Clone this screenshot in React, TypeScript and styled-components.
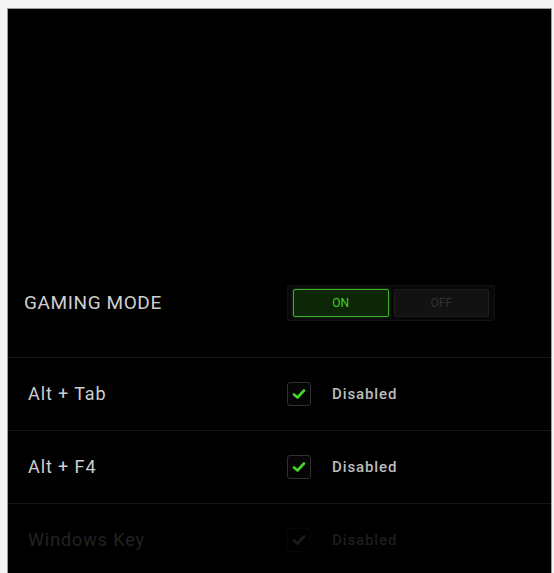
import React from 'react';
import styled, { createGlobalStyle } from 'styled-components';

const GlobalStyle = createGlobalStyle`
  html, body {
    margin: 0;
    padding: 0;
    background: #f4f4f4;
  }
  body {
    padding: 8px 2px 0 7px;
    font-family: Roboto, "Liberation Sans", sans-serif;
  }
`;

const Panel = styled.div`
  height: 565px;
  background: #000;
  border: 1px solid #9c9c9c;
  border-bottom: none;
  display: flex;
  flex-direction: column;
  overflow: hidden;
`;

const TopArea = styled.div`
  height: 239px;
  flex-shrink: 0;
`;

const Row = styled.div<{ $tall?: boolean }>`
  flex-shrink: 0;
  display: grid;
  grid-template-columns: ${p => (p.$tall ? '263px' : '259px')} 1fr;
  align-items: center;
  height: ${p => (p.$tall ? '109px' : '72px')};
  padding-left: ${p => (p.$tall ? '16px' : '20px')};
  border-bottom: 1px solid #181818;
`;

const Label = styled.div<{ $caps?: boolean; $dim?: boolean }>`
  font-size: ${p => (p.$caps ? '19px' : '18px')};
  color: ${p => (p.$dim ? '#222' : '#cfcfcf')};
  letter-spacing: ${p => (p.$caps ? '0.6px' : '0.9px')};
  margin-top: ${p => (p.$caps ? '0' : '-2px')};
`;

const Toggle = styled.div`
  display: flex;
  gap: 5px;
  width: 196px;
  padding: 3px 5px;
  background: #080808;
  border: 1px solid #111;
  border-radius: 2px;
`;

const ToggleButton = styled.div<{ $active?: boolean }>`
  flex: 1;
  height: 26px;
  display: flex;
  align-items: center;
  justify-content: center;
  font-size: 12px;
  border-radius: 2px;
  border: 1px solid ${p => (p.$active ? '#3fb02a' : '#1e1e1e')};
  background: ${p => (p.$active ? '#0c2607' : '#121212')};
  color: ${p => (p.$active ? '#45d02c' : '#333')};
  box-shadow: ${p => (p.$active ? '0 0 3px rgba(68, 214, 44, 0.35)' : 'none')};
`;

const Option = styled.div<{ $dim?: boolean }>`
  display: flex;
  align-items: center;
  gap: 21px;
  opacity: ${p => (p.$dim ? 0.15 : 1)};
`;

const Box = styled.div`
  width: 24px;
  height: 24px;
  box-sizing: border-box;
  border: 1px solid #303030;
  border-radius: 3px;
  background: #050505;
  display: flex;
  align-items: center;
  justify-content: center;
`;

const OptionText = styled.span`
  font-size: 15px;
  font-weight: 500;
  color: #bdbdbd;
  letter-spacing: 0.9px;
`;

const Check: React.FC<{ color: string }> = ({ color }) => (
  <svg width="14" height="12" viewBox="0 0 14 12">
    <path d="M2 6.5 L5.5 9.5 L12 2.5" fill="none" stroke={color} strokeWidth="2.6" strokeLinecap="round" strokeLinejoin="round" />
  </svg>
);

const keys = [
  { name: 'Alt + Tab', dim: false },
  { name: 'Alt + F4', dim: false },
  { name: 'Windows Key', dim: true },
];

const App: React.FC = () => {
  return (
    <>
      <GlobalStyle />
      <Panel>
        <TopArea />
        <Row $tall>
          <Label $caps>GAMING MODE</Label>
          <Toggle>
            <ToggleButton $active>ON</ToggleButton>
            <ToggleButton>OFF</ToggleButton>
          </Toggle>
        </Row>
        {keys.map(k => (
          <Row key={k.name}>
            <Label $dim={k.dim}>{k.name}</Label>
            <Option $dim={k.dim}>
              <Box>
                <Check color={k.dim ? '#bdbdbd' : '#44d62c'} />
              </Box>
              <OptionText>Disabled</OptionText>
            </Option>
          </Row>
        ))}
      </Panel>
    </>
  );
};

export default App;
